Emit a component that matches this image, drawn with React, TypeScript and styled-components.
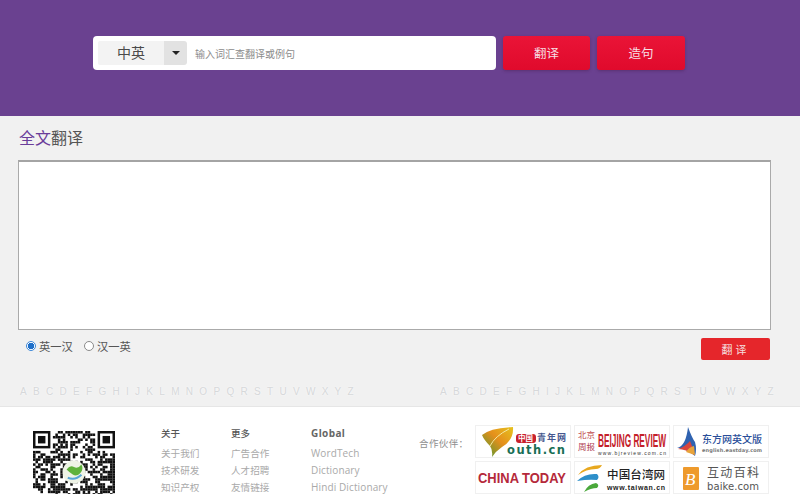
import React from "react";
import styled, { createGlobalStyle } from "styled-components";

const Global = createGlobalStyle`
  html, body { margin: 0; padding: 0; height: 494px; overflow: hidden; background: #f1f1f1; }
  body { font-family: "Liberation Sans", "Noto Sans CJK SC", sans-serif; }
  #root { height: 494px; overflow: hidden; }
  * { box-sizing: border-box; }
`;

const Page = styled.div`
  width: 800px;
  height: 494px;
  overflow: hidden;
  display: flex;
  flex-direction: column;
`;
const Header = styled.header`
  flex: none;
  height: 116px;
  background: #6a4190;
  padding: 36px 0 0 93px;
  display: flex;
  align-items: flex-start;
`;
const SearchBox = styled.div`
  width: 403px;
  height: 34px;
  background: #fff;
  border-radius: 4px;
  padding: 5px;
  display: flex;
  align-items: center;
`;
const Lang = styled.div`
  width: 66px;
  height: 24px;
  background: #f3f3f3;
  color: #4a4a4a;
  font-size: 14px;
  line-height: 24px;
  text-align: center;
  border-radius: 2px 0 0 2px;
`;
const Caret = styled.div`
  width: 23px;
  height: 24px;
  background: #e2e2e2;
  border-radius: 0 3px 3px 0;
  display: flex;
  align-items: center;
  justify-content: center;
  &::after {
    content: "";
    border-left: 4px solid transparent;
    border-right: 4px solid transparent;
    border-top: 4px solid #222;
  }
`;
const Hint = styled.span`
  margin-left: 8px;
  font-size: 10px;
  color: #8c8c8c;
`;
const HeadButton = styled.button<{ $w: number }>`
  width: ${(p) => p.$w}px;
  height: 34px;
  margin-left: 7px;
  border: 0;
  border-radius: 3px;
  background: linear-gradient(#ea1437, #e00a2c);
  box-shadow: 0 1px 3px rgba(60, 20, 60, 0.35);
  color: #f6dfe3;
  font: 12.5px "Noto Sans CJK SC", sans-serif;
  padding: 0 0 2px;
`;
const Main = styled.main`
  flex: none;
  height: 291px;
  padding: 0 29px 0 18px;
  border-bottom: 1px solid #e6e6e6;
`;
const Title = styled.h2`
  margin: 0;
  height: 44px;
  padding: 9px 0 0 1px;
  font: 400 16px/24px "Noto Sans CJK SC", sans-serif;
  color: #555;
  em { font-style: normal; color: #6a3d9a; }
`;
const Area = styled.div`
  width: 753px;
  height: 170px;
  background: #fff;
  border: 1px solid #aaa;
  border-top: 2px solid #a4a4a4;
`;
const ControlRow = styled.div`
  width: 752px;
  height: 22px;
  margin-top: 8px;
  display: flex;
  align-items: center;
  justify-content: space-between;
`;
const Radios = styled.div`
  display: flex;
  align-items: center;
  padding-left: 8px;
  margin-top: -6px;
`;
const Radio = styled.span<{ $on?: boolean }>`
  width: 10px;
  height: 10px;
  border-radius: 50%;
  border: 1px solid ${(p) => (p.$on ? "#3b87d8" : "#8a8a8a")};
  background: ${(p) => (p.$on ? "radial-gradient(circle, #1f6fc9 0 3px, #fff 3.5px)" : "#fff")};
  margin-right: 3px;
`;
const RadioLabel = styled.span`
  font: 11.3px "Noto Sans CJK SC", sans-serif;
  color: #555;
  margin-right: 11px;
`;
const Translate = styled.button`
  width: 69px;
  height: 22px;
  border: 0;
  border-radius: 2px;
  background: #e5262b;
  color: #f5dcdc;
  font: 11px "Noto Sans CJK SC", sans-serif;
  letter-spacing: 3px;
  padding: 0;
`;
const Letters = styled.div`
  display: flex;
  justify-content: space-between;
  margin-top: 25px;
  width: 756px;
  padding-left: 2px;
`;
const LetterSet = styled.div`
  width: 334px;
  display: flex;
  justify-content: space-between;
  font-size: 10px;
  line-height: 14px;
  color: #d6d8da;
  text-shadow: 0 0 2px #fff;
`;
const Footer = styled.footer`
  flex: 1;
  background: #fff;
  display: flex;
  align-items: flex-start;
  padding-left: 33px;
  position: relative;
`;
const QrWrap = styled.div`
  width: 82px;
  margin-top: 24px;
  margin-right: 46px;
  flex: none;
`;
const Col = styled.div<{ $w: number }>`
  width: ${(p) => p.$w}px;
  padding-top: 19px;
  flex: none;
`;
const ColHead = styled.div`
  font: 500 9.5px/14px "Noto Sans CJK SC", sans-serif;
  color: #555;
  margin-bottom: 5px;
`;
const ColHeadLatin = styled(ColHead)`
  font: 700 10px/14px "Open Sans", sans-serif;
  letter-spacing: 0.4px;
  color: #666;
`;
const ColItem = styled.div`
  font: 9.6px/17px "Noto Sans CJK SC", sans-serif;
  color: #a9a9a9;
`;
const ColItemLatin = styled(ColItem)`
  font: 10px/17px "Open Sans", sans-serif;
  letter-spacing: 0.12px;
`;
const PartnerLabel = styled.div`
  width: 56px;
  flex: none;
  padding-top: 29px;
  font: 9.5px/14px "Noto Sans CJK SC", sans-serif;
  letter-spacing: 0.4px;
  color: #8f8f8f;
`;
const Partners = styled.div`
  display: grid;
  grid-template-columns: 96px 96px 96px;
  grid-auto-rows: 33px;
  column-gap: 3px;
  row-gap: 3px;
  padding-top: 18px;
`;
const Cell = styled.div`
  border: 1px solid #f0f0f0;
  background: #fff;
  overflow: hidden;
  svg { display: block; }
`;

const AZ = "ABCDEFGHIJKLMNOPQRSTUVWXYZ".split("");

function Qr() {
  const n = 33;
  const rects: React.ReactNode[] = [];
  let seed = 17;
  const rnd = () => {
    seed = (seed * 16807) % 2147483647;
    return seed / 2147483647;
  };
  const inFinder = (x: number, y: number) =>
    (x < 8 && y < 8) || (x >= n - 8 && y < 8) || (x < 8 && y >= n - 8);
  for (let y = 0; y < n; y++)
    for (let x = 0; x < n; x++)
      if (!inFinder(x, y) && rnd() > 0.46)
        rects.push(<rect key={`${x}-${y}`} x={x} y={y} width="1.02" height="1.02" />);
  const finder = (x: number, y: number) => (
    <g key={`f${x}${y}`}>
      <rect x={x} y={y} width="7" height="7" />
      <rect x={x + 1} y={y + 1} width="5" height="5" fill="#fff" />
      <rect x={x + 2} y={y + 2} width="3" height="3" />
    </g>
  );
  return (
    <svg width="82" height="82" viewBox="0 0 33 33" fill="#111">
      {rects}
      {finder(0, 0)}
      {finder(26, 0)}
      {finder(0, 26)}
      <circle cx="16.5" cy="16.5" r="4.6" fill="#eef3e6" />
      <path d="M13.5 15.5q1.5-2 3-1t3-1q1 2-.5 3.5t-3 .5-2.5-2z" fill="#5fb23c" />
      <path d="M14 18.8q3 1.2 5.5-1.2" stroke="#58a6d8" strokeWidth="0.8" fill="none" />
    </svg>
  );
}

const Youth = () => (
  <svg width="94" height="31" viewBox="0 0 94 31">
    <defs>
      <linearGradient id="fan" x1="1" y1="0" x2="0" y2="1">
        <stop offset="0" stopColor="#e6c21e" />
        <stop offset="0.45" stopColor="#e58f1c" />
        <stop offset="1" stopColor="#3f9a34" />
      </linearGradient>
    </defs>
    <path d="M6 9Q14 2 37 1 38 14 26 21 20 25 16 31 17 24 14 20 8 14 6 9z" fill="url(#fan)" />
    <path d="M14 20Q19 10 33 3" stroke="#f4e9a0" strokeWidth="1" fill="none" />
    <rect x="40" y="8" width="20" height="9" rx="3" fill="#c8202c" />
    <text x="42" y="15" fontSize="7.5" fontWeight="700" fill="#fff" fontFamily="Noto Sans CJK SC">中国</text>
    <text x="61" y="15" fontSize="9" fontWeight="700" fill="#46588f" fontFamily="Noto Sans CJK SC" textLength="29">青年网</text>
    <text x="31" y="28" fontSize="11.5" fontWeight="700" fill="#1a6f55" fontFamily="DejaVu Sans" textLength="58">outh.cn</text>
  </svg>
);
const Beijing = () => (
  <svg width="94" height="31" viewBox="0 0 94 31">
    <text x="3" y="12" fontSize="8.5" fill="#c05050" fontFamily="Noto Sans CJK SC">北京</text>
    <text x="3" y="24" fontSize="8.5" fill="#b04050" fontFamily="Noto Sans CJK SC">周报</text>
    <text x="23" y="21" fontSize="19" fontWeight="700" fill="#c4202a" fontFamily="Liberation Sans" textLength="68" lengthAdjust="spacingAndGlyphs">BEIJING REVIEW</text>
    <text x="23" y="29" fontSize="5" fill="#333" fontFamily="Liberation Sans" textLength="68">www.bjreview.com.cn</text>
  </svg>
);
const Eastday = () => (
  <svg width="94" height="31" viewBox="0 0 94 31">
    <path d="M3 22Q12 20 14 1q4 11 7 15 2 7 0 14Q11 21 3 22z" fill="#2f62b0" />
    <path d="M4 23q8-3 12-8 3 6 4 14-8-6-16-6z" fill="#d8453e" />
    <path d="M12 26q3-5 8-6l1 9z" fill="#e8a33a" />
    <text x="28" y="17" fontSize="10" fontWeight="500" fill="#2b4f9a" fontFamily="Noto Sans CJK SC" textLength="60">东方网英文版</text>
    <text x="28" y="26" fontSize="5" fontWeight="700" fill="#777" fontFamily="DejaVu Sans" textLength="60">english.eastday.com</text>
  </svg>
);
const ChinaToday = () => (
  <svg width="94" height="31" viewBox="0 0 94 31">
    <text x="2" y="21" fontSize="14" fontWeight="700" fill="#b5293a" fontFamily="Liberation Sans" textLength="88" lengthAdjust="spacingAndGlyphs">CHINA TODAY</text>
  </svg>
);
const Taiwan = () => (
  <svg width="94" height="31" viewBox="0 0 94 31">
    <path d="M3 13Q10 3 27 3q-2 4-6 4Q11 7 3 13z" fill="#e8a81e" />
    <path d="M2 19q8-8 20-7 3 3 0 6-8-1-20 1z" fill="#2d8fc9" />
    <path d="M9 30q4-8 12-9 4 2 1 5-6 0-13 4z" fill="#4aa83b" />
    <text x="32" y="17" fontSize="11.5" fontWeight="500" fill="#222" fontFamily="Noto Sans CJK SC" textLength="58">中国台湾网</text>
    <text x="32" y="28" fontSize="7" fontWeight="700" fill="#222" fontFamily="Liberation Sans" textLength="58">www.taiwan.cn</text>
  </svg>
);
const Baike = () => (
  <svg width="94" height="31" viewBox="0 0 94 31">
    <rect x="9" y="5" width="16" height="23" rx="1" fill="#ee9a2c" />
    <text x="11" y="23" fontSize="17" fontStyle="italic" fill="#fff" fontFamily="Liberation Serif">B</text>
    <text x="33" y="15" fontSize="12" fill="#555" fontFamily="Noto Sans CJK SC" textLength="52">互动百科</text>
    <text x="33" y="28" fontSize="10" fill="#555" fontFamily="DejaVu Sans" textLength="52">baike.com</text>
  </svg>
);

export default function App() {
  return (
    <Page>
      <Global />
      <Header>
        <SearchBox>
          <Lang>中英</Lang>
          <Caret />
          <Hint>输入词汇查翻译或例句</Hint>
        </SearchBox>
        <HeadButton $w={87}>翻译</HeadButton>
        <HeadButton $w={88}>造句</HeadButton>
      </Header>
      <Main>
        <Title>
          <em>全文</em>翻译
        </Title>
        <Area />
        <ControlRow>
          <Radios>
            <Radio $on />
            <RadioLabel>英一汉</RadioLabel>
            <Radio />
            <RadioLabel>汉一英</RadioLabel>
          </Radios>
          <Translate>翻译</Translate>
        </ControlRow>
        <Letters>
          <LetterSet>{AZ.map((l) => <span key={l}>{l}</span>)}</LetterSet>
          <LetterSet>{AZ.map((l) => <span key={l}>{l}</span>)}</LetterSet>
        </Letters>
      </Main>
      <Footer>
        <QrWrap><Qr /></QrWrap>
        <Col $w={70}>
          <ColHead>关于</ColHead>
          <ColItem>关于我们</ColItem>
          <ColItem>技术研发</ColItem>
          <ColItem>知识产权</ColItem>
        </Col>
        <Col $w={80}>
          <ColHead>更多</ColHead>
          <ColItem>广告合作</ColItem>
          <ColItem>人才招聘</ColItem>
          <ColItem>友情链接</ColItem>
        </Col>
        <Col $w={108}>
          <ColHeadLatin>Global</ColHeadLatin>
          <ColItemLatin>WordTech</ColItemLatin>
          <ColItemLatin>Dictionary</ColItemLatin>
          <ColItemLatin>Hindi Dictionary</ColItemLatin>
        </Col>
        <PartnerLabel>合作伙伴：</PartnerLabel>
        <Partners>
          <Cell><Youth /></Cell>
          <Cell><Beijing /></Cell>
          <Cell><Eastday /></Cell>
          <Cell><ChinaToday /></Cell>
          <Cell><Taiwan /></Cell>
          <Cell><Baike /></Cell>
        </Partners>
      </Footer>
    </Page>
  );
}
